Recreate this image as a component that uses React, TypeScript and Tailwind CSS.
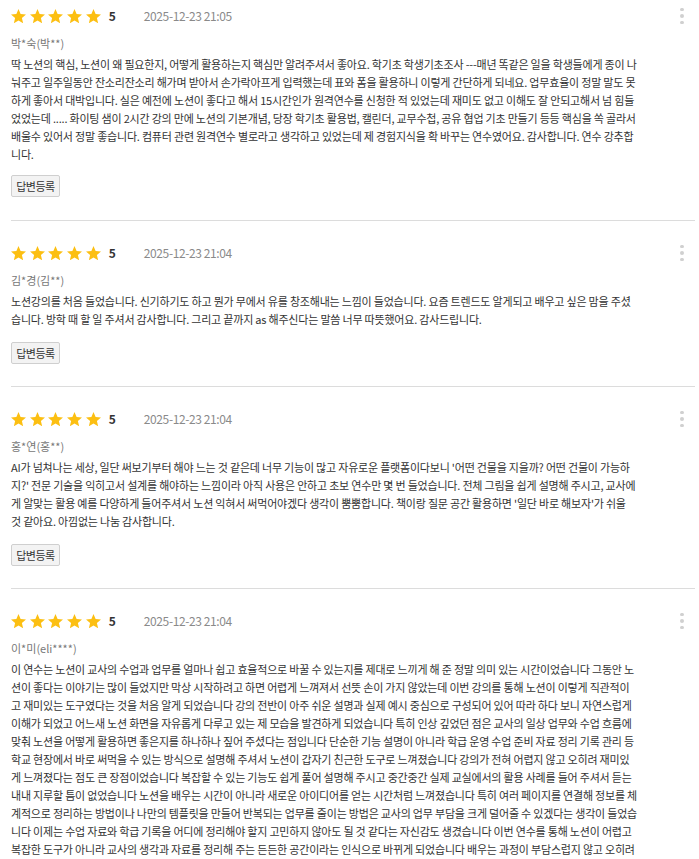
import React from 'react';

type Review = {
  name: string;
  date: string;
  score: number;
  lines: string[];
};

const reviews: Review[] = [
  {
    name: '박*숙(박**)',
    date: '2025-12-23 21:05',
    score: 5,
    lines: [
      '딱 노션의 핵심, 노션이 왜 필요한지, 어떻게 활용하는지 핵심만 알려주셔서 좋아요. 학기초 학생기초조사 ---매년 똑같은 일을 학생들에게 종이 나',
      '눠주고 일주일동안 잔소리잔소리 해가며 받아서 손가락아프게 입력했는데 표와 폼을 활용하니 이렇게 간단하게 되네요. 업무효율이 정말 말도 못',
      '하게 좋아서 대박입니다. 실은 예전에 노션이 좋다고 해서 15시간인가 원격연수를 신청한 적 있었는데 재미도 없고 이해도 잘 안되고해서 넘 힘들',
      '었었는데 ..... 화이팅 샘이 2시간 강의 만에 노션의 기본개념, 당장 학기초 활용법, 캘린더, 교무수첩, 공유 협업 기초 만들기 등등 핵심을 쏙 골라서',
      '배울수 있어서 정말 좋습니다. 컴퓨터 관련 원격연수 별로라고 생각하고 있었는데 제 경험지식을 확 바꾸는 연수였어요. 감사합니다. 연수 강추합',
      '니다.',
    ],
  },
  {
    name: '김*경(김**)',
    date: '2025-12-23 21:04',
    score: 5,
    lines: [
      '노션강의를 처음 들었습니다. 신기하기도 하고 뭔가 무에서 유를 창조해내는 느낌이 들었습니다. 요즘 트렌드도 알게되고 배우고 싶은 맘을 주셨',
      '습니다. 방학 때 할 일 주셔서 감사합니다. 그리고 끝까지 as 해주신다는 말씀 너무 따뜻했어요. 감사드립니다.',
    ],
  },
  {
    name: '홍*연(홍**)',
    date: '2025-12-23 21:04',
    score: 5,
    lines: [
      "AI가 넘쳐나는 세상, 일단 써보기부터 해야 느는 것 같은데 너무 기능이 많고 자유로운 플랫폼이다보니 '어떤 건물을 지을까? 어떤 건물이 가능하",
      "지?' 전문 기술을 익히고서 설계를 해야하는 느낌이라 아직 사용은 안하고 초보 연수만 몇 번 들었습니다. 전체 그림을 쉽게 설명해 주시고, 교사에",
      "게 알맞는 활용 예를 다양하게 들어주셔서 노션 익혀서 써먹어야겠다 생각이 뿜뿜합니다. 책이랑 질문 공간 활용하면 '일단 바로 해보자'가 쉬울",
      '것 같아요. 아낌없는 나눔 감사합니다.',
    ],
  },
  {
    name: '이*미(eli****)',
    date: '2025-12-23 21:04',
    score: 5,
    lines: [
      '이 연수는 노션이 교사의 수업과 업무를 얼마나 쉽고 효율적으로 바꿀 수 있는지를 제대로 느끼게 해 준 정말 의미 있는 시간이었습니다 그동안 노',
      '션이 좋다는 이야기는 많이 들었지만 막상 시작하려고 하면 어렵게 느껴져서 선뜻 손이 가지 않았는데 이번 강의를 통해 노션이 이렇게 직관적이',
      '고 재미있는 도구였다는 것을 처음 알게 되었습니다 강의 전반이 아주 쉬운 설명과 실제 예시 중심으로 구성되어 있어 따라 하다 보니 자연스럽게',
      '이해가 되었고 어느새 노션 화면을 자유롭게 다루고 있는 제 모습을 발견하게 되었습니다 특히 인상 깊었던 점은 교사의 일상 업무와 수업 흐름에',
      '맞춰 노션을 어떻게 활용하면 좋은지를 하나하나 짚어 주셨다는 점입니다 단순한 기능 설명이 아니라 학급 운영 수업 준비 자료 정리 기록 관리 등',
      '학교 현장에서 바로 써먹을 수 있는 방식으로 설명해 주셔서 노션이 갑자기 친근한 도구로 느껴졌습니다 강의가 전혀 어렵지 않고 오히려 재미있',
      '게 느껴졌다는 점도 큰 장점이었습니다 복잡할 수 있는 기능도 쉽게 풀어 설명해 주시고 중간중간 실제 교실에서의 활용 사례를 들어 주셔서 듣는',
      '내내 지루할 틈이 없었습니다 노션을 배우는 시간이 아니라 새로운 아이디어를 얻는 시간처럼 느껴졌습니다 특히 여러 페이지를 연결해 정보를 체',
      '계적으로 정리하는 방법이나 나만의 템플릿을 만들어 반복되는 업무를 줄이는 방법은 교사의 업무 부담을 크게 덜어줄 수 있겠다는 생각이 들었습',
      '니다 이제는 수업 자료와 학급 기록을 어디에 정리해야 할지 고민하지 않아도 될 것 같다는 자신감도 생겼습니다 이번 연수를 통해 노션이 어렵고',
      '복잡한 도구가 아니라 교사의 생각과 자료를 정리해 주는 든든한 공간이라는 인식으로 바뀌게 되었습니다 배우는 과정이 부담스럽지 않고 오히려',
      '즐거웠기 때문에 연수 이후에도 계속 활용해 보고 싶다는 마음이 들었습니다 노션을 처음 접하는 교사에게는 두려움을 없애 주는 친절한 시작이',
      '되어 줄 강의라고 생각합니다 좋은 강의 감사합니다',
    ],
  },
];

function Star() {
  return (
    <svg viewBox="2 2 20 19.3" className="w-[15px] h-[14.5px]" fill="#fcbf12">
      <path d="M12 17.27L18.18 21l-1.64-7.03L22 9.24l-7.19-.61L12 2 9.19 8.63 2 9.24l5.46 4.73L5.82 21z" />
    </svg>
  );
}

function ReviewItem({ review, first }: { review: Review; first: boolean }) {
  return (
    <div className={first ? 'pt-[7px] pb-[23px]' : 'pt-[23px] pb-[22px] border-t border-[#dcdcdc]'}>
      <div className="flex items-center h-[18px]">
        <div className="flex items-center gap-[3.7px]">
          {Array.from({ length: review.score }).map((_, i) => (
            <Star key={i} />
          ))}
        </div>
        <span className="ml-[8px] text-[12px] font-bold text-[#333]">{review.score}</span>
        <span className="ml-[28px] text-[12px] tracking-[-0.4px] text-[#8a8a8a]">{review.date}</span>
        <button className="ml-auto mr-[3px] w-[20px] h-[18px] flex flex-col items-center justify-center gap-[3px]">
          <span className="w-[3.5px] h-[3.5px] rounded-full bg-[#d0d0d0]" />
          <span className="w-[3.5px] h-[3.5px] rounded-full bg-[#d0d0d0]" />
          <span className="w-[3.5px] h-[3.5px] rounded-full bg-[#d0d0d0]" />
        </button>
      </div>
      <p className="mt-[9px] text-[11px] leading-[18px] text-[#777]">{review.name}</p>
      <p className="mt-[3px] text-[11px] leading-[18px] tracking-[-0.2px] text-[#333]">
        {review.lines.map((line, i) => (
          <span key={i} className="block whitespace-nowrap">
            {line}
          </span>
        ))}
      </p>
      <button
        className={
          (first ? 'mt-[12px] ' : 'mt-[14px] ') +
          'w-[49px] h-[22px] flex items-center justify-center bg-[#f3f3f3] border border-[#cfcfcf] rounded-[2px] text-[11px] tracking-[-0.5px] text-[#333]'
        }
      >
        답변등록
      </button>
    </div>
  );
}

export default function App() {
  return (
    <div
      className="min-h-screen bg-white pl-[11px] pr-[4px] overflow-hidden"
      style={{ fontFamily: '"Noto Sans CJK KR", "Noto Sans", sans-serif' }}
    >
      {reviews.map((review, i) => (
        <ReviewItem key={i} review={review} first={i === 0} />
      ))}
    </div>
  );
}
